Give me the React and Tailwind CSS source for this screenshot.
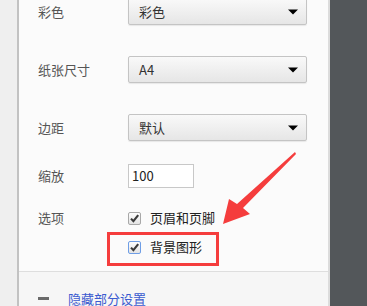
import React from 'react';

const font = { fontFamily: '"Noto Sans CJK SC", "Noto Sans", sans-serif' };

const Select = ({ value }) => (
  <div className="relative h-[27px] w-[179px] rounded-[2px] border border-[#c4c4c4] bg-gradient-to-b from-[#f9f9f9] to-[#e6e6e6] shadow-[0_1px_1px_rgba(0,0,0,0.08)] flex items-center pl-[10px] text-[13px] text-[#333]">
    {value}
    <span className="absolute right-[8px] top-1/2 -translate-y-1/2 w-0 h-0 border-l-[5px] border-r-[5px] border-t-[5px] border-l-transparent border-r-transparent border-t-black" />
  </div>
);

const Check = ({ focus }) => (
  <span
    className={`flex h-[13px] w-[13px] items-center justify-center rounded-[2px] border bg-gradient-to-b from-[#fdfdfd] to-[#e4e4e4] ${focus ? 'border-[#6f9ee6]' : 'border-[#a8a8a8]'}`}
  >
    <svg width="11" height="11" viewBox="0 0 11 11">
      <path d="M2 5.6 L4.4 8.2 L9.2 2.2" fill="none" stroke="#3a3a3a" strokeWidth="2.1" />
    </svg>
  </span>
);

const Row = ({ label, children, className = '' }) => (
  <div className={`flex items-center ${className}`}>
    <div className="w-[90px] text-[13px] text-[#555]">{label}</div>
    {children}
  </div>
);

export default function App() {
  return (
    <div className="relative flex h-[306px] w-[367px] overflow-hidden" style={font}>
      <div className="w-[19px] bg-[#efefef] border-r-[2px] border-[#c2c2c2]" />
      <div className="flex w-[309px] flex-col bg-[#fbfbfb]">
        <div className="flex flex-col pl-[19px] mt-[-2px]">
          <Row label="彩色"><Select value="彩色" /></Row>
          <Row label="纸张尺寸" className="mt-[31px]"><Select value="A4" /></Row>
          <Row label="边距" className="mt-[31px]"><Select value="默认" /></Row>
          <Row label="缩放" className="mt-[23px]">
            <div className="flex h-[24px] w-[66px] items-center border border-[#c8c8c8] bg-white pl-[3px] text-[13px] text-[#222]">
              100
            </div>
          </Row>
          <Row label="选项" className="mt-[23px] h-[14px]">
            <div className="flex items-center gap-[9px] text-[13px] text-[#222]">
              <Check />
              <span>页眉和页脚</span>
            </div>
          </Row>
          <div className="mt-[15px] flex h-[14px] items-center gap-[9px] pl-[90px] text-[13px] text-[#222]">
            <Check focus />
            <span>背景图形</span>
          </div>
        </div>
        <div className="mt-[17px] flex-1 border-t border-[#dedede] bg-[#f6f6f6] pl-[19px]">
          <div className="mt-[17px] flex items-center">
            <span className="w-[11px] h-[3px] bg-[#6a6a6a]" />
            <span className="ml-[19px] text-[13px] text-[#3b5bd0]">隐藏部分设置</span>
          </div>
        </div>
      </div>
      <div className="flex-1 bg-[#53575a] border-l-[2px] border-[#dcdcdc]" />

      <div className="absolute left-[107px] top-[232px] h-[34px] w-[112px] border-[3px] border-[#f53d3d]" />
      <svg className="absolute left-0 top-0" width="367" height="306" viewBox="0 0 367 306">
        <polygon
          points="295,152 296,154 243,208 250,214 223,224 229,199 237,204"
          fill="#f53d3d"
        />
      </svg>
    </div>
  );
}
